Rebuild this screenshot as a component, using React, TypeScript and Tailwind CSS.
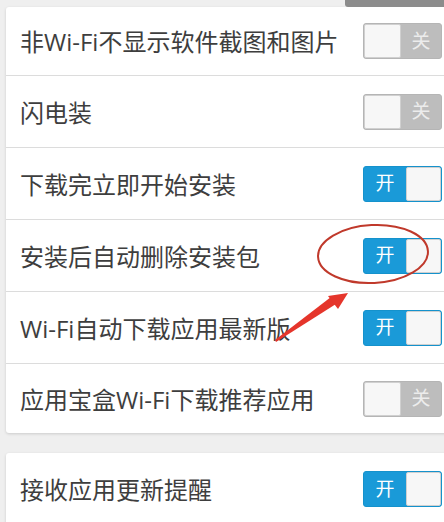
import React from 'react';

type Row = { label: string; on: boolean };

const rows: Row[] = [
  { label: '非Wi-Fi不显示软件截图和图片', on: false },
  { label: '闪电装', on: false },
  { label: '下载完立即开始安装', on: true },
  { label: '安装后自动删除安装包', on: true },
  { label: 'Wi-Fi自动下载应用最新版', on: true },
  { label: '应用宝盒Wi-Fi下载推荐应用', on: false },
];

function Toggle({ on }: { on: boolean }) {
  if (on) {
    return (
      <div className="flex h-[36px] w-[79px] overflow-hidden rounded-[3px] border border-[#1592cc] bg-[#1a9ad8]">
        <div className="flex w-[42px] items-center justify-center text-[19px] text-white">开</div>
        <div className="flex-1 rounded-[2px] border border-[#d0d0d0] bg-[#f7f7f7]" />
      </div>
    );
  }
  return (
    <div className="flex h-[36px] w-[79px] overflow-hidden rounded-[3px] border border-[#b5b5b5] bg-[#bdbdbd]">
      <div className="w-[37px] rounded-[2px] border border-[#d0d0d0] bg-[#f7f7f7]" />
      <div className="flex flex-1 items-center justify-center text-[19px] text-[#ececec]">关</div>
    </div>
  );
}

function SettingRow({ row, height, last }: { row: Row; height: string; last?: boolean }) {
  return (
    <div className={`flex items-center justify-between pl-[14px] pr-[14px] ${height} ${last ? '' : 'border-b border-[#dcdcdc]'}`}>
      <span className="pt-[2px] text-[24px] text-[#3e3e3e]">{row.label}</span>
      <Toggle on={row.on} />
    </div>
  );
}

export default function App() {
  return (
    <div
      className="relative h-[522px] w-[444px] overflow-hidden bg-[#efefef]"
      style={{ fontFamily: '"Open Sans", "Noto Sans CJK SC", sans-serif' }}
    >
      <div className="absolute right-0 top-0 h-[7px] w-[99px] rounded-bl-[3px] bg-[#8c8c8c]" />

      <div className="ml-[6px] mt-[7px] w-[450px] rounded-[3px] bg-white shadow-[0_1px_3px_rgba(0,0,0,0.15)]">
        {rows.map((row, i) => (
          <SettingRow
            key={row.label}
            row={row}
            height={i === 0 || i === rows.length - 1 ? 'h-[69px]' : 'h-[72px]'}
            last={i === rows.length - 1}
          />
        ))}
      </div>

      <div className="ml-[6px] mt-[20px] w-[450px] rounded-[3px] bg-white shadow-[0_1px_3px_rgba(0,0,0,0.15)]">
        <SettingRow row={{ label: '接收应用更新提醒', on: true }} height="h-[72px]" last />
      </div>

      <svg className="pointer-events-none absolute left-0 top-0" width="444" height="522" viewBox="0 0 444 522">
        <ellipse cx="373" cy="254" rx="55" ry="29" fill="none" stroke="#c0392b" strokeWidth="2" transform="rotate(-3 373 254)" />
        <polygon points="275,340 276,342 336,304 331,297" fill="#e5352b" />
        <polygon points="348,293 338,309 328,296" fill="#e5352b" />
      </svg>
    </div>
  );
}
